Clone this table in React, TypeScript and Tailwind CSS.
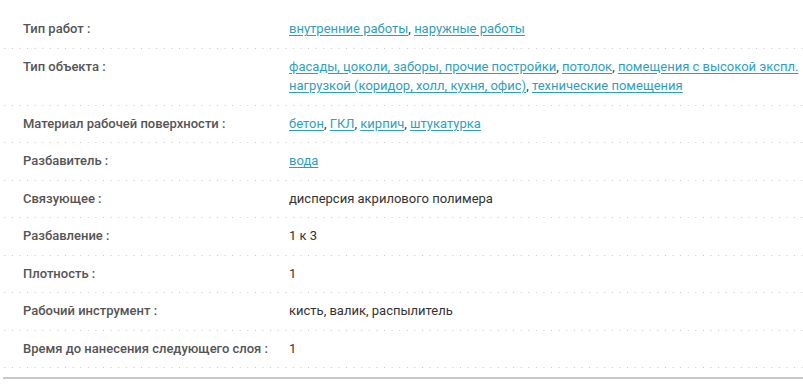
import React from 'react';

type Part = { text: string; link?: boolean };

const rows: { label: string; value: Part[] }[] = [
  {
    label: 'Тип работ :',
    value: [
      { text: 'внутренние работы', link: true },
      { text: ', ' },
      { text: 'наружные работы', link: true },
    ],
  },
  {
    label: 'Тип объекта :',
    value: [
      { text: 'фасады, цоколи, заборы, прочие постройки', link: true },
      { text: ', ' },
      { text: 'потолок', link: true },
      { text: ', ' },
      { text: 'помещения с высокой экспл. нагрузкой (коридор, холл, кухня, офис)', link: true },
      { text: ', ' },
      { text: 'технические помещения', link: true },
    ],
  },
  {
    label: 'Материал рабочей поверхности :',
    value: [
      { text: 'бетон', link: true },
      { text: ', ' },
      { text: 'ГКЛ', link: true },
      { text: ', ' },
      { text: 'кирпич', link: true },
      { text: ', ' },
      { text: 'штукатурка', link: true },
    ],
  },
  { label: 'Разбавитель :', value: [{ text: 'вода', link: true }] },
  { label: 'Связующее :', value: [{ text: 'дисперсия акрилового полимера' }] },
  { label: 'Разбавление :', value: [{ text: '1 к 3' }] },
  { label: 'Плотность :', value: [{ text: '1' }] },
  { label: 'Рабочий инструмент :', value: [{ text: 'кисть, валик, распылитель' }] },
  { label: 'Время до нанесения следующего слоя :', value: [{ text: '1' }] },
];

const App: React.FC = () => {
  return (
    <div className="w-[803px] h-[391px] bg-white overflow-hidden font-['Roboto',sans-serif] text-[13px] leading-[19.5px]">
      <div className="pl-[3px] pt-[11px]">
        {/* Characteristics table */}
        <div className="border-b-2 border-[#c8c8c8] pb-[9px]">
          {rows.map((row, i) => (
            <div
              key={i}
              className="flex pt-[8px] pb-[10px] bg-[linear-gradient(to_right,#c9c9c9_1px,transparent_1px)] bg-[length:7.6px_1px] bg-repeat-x bg-bottom"
            >
              <div className="w-[286px] shrink-0 pl-5 font-medium text-[#555555]">{row.label}</div>
              <div className="flex-1 text-[#333333]">
                {row.value.map((p, j) =>
                  p.link ? (
                    <a key={j} href="#" className="text-[#2f9fc0] underline underline-offset-2">
                      {p.text}
                    </a>
                  ) : (
                    <span key={j}>{p.text}</span>
                  )
                )}
              </div>
            </div>
          ))}
        </div>
      </div>
    </div>
  );
};

export default App;
